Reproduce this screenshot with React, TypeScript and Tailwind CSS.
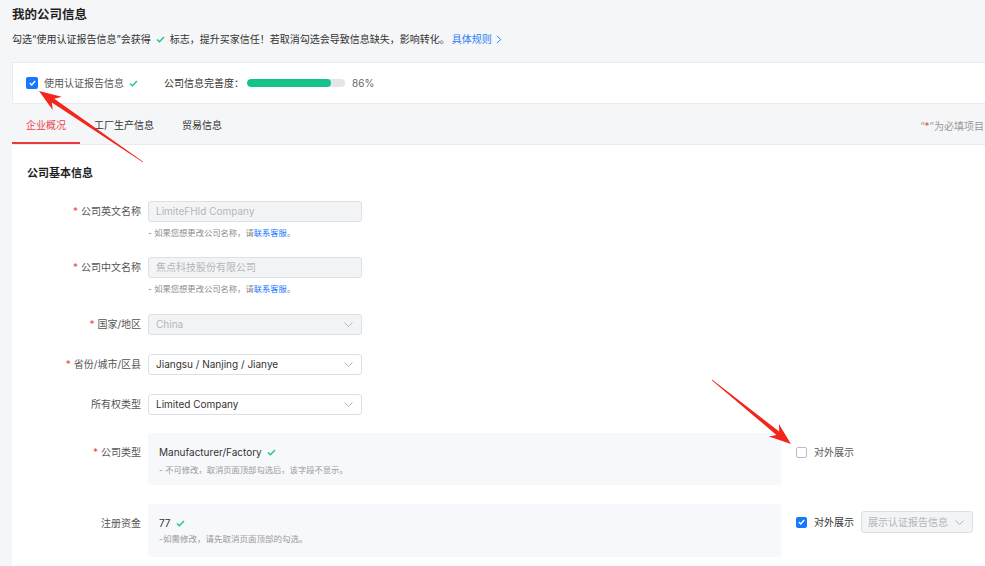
import type { FC, ReactNode } from 'react';

const GreenCheck: FC = () => (
  <svg width="9" height="7" viewBox="0 0 9 7" className="inline-block">
    <path d="M1 3.4l2.4 2.4L8 1" fill="none" stroke="#1fc58e" strokeWidth="1.4" />
  </svg>
);

const Chevron: FC = () => (
  <svg width="9" height="5" viewBox="0 0 9 5">
    <path d="M0.5 0.5l4 4 4-4" fill="none" stroke="#b3b6bb" strokeWidth="1" />
  </svg>
);

const Box: FC<{ checked?: boolean; size?: string }> = ({ checked, size = 'w-[11px] h-[11px]' }) =>
  checked ? (
    <span className={`${size} rounded-[2px] bg-[#1677ff] flex items-center justify-center shrink-0`}>
      <svg width="7" height="6" viewBox="0 0 7 6">
        <path d="M0.8 3l1.9 1.9L6.2 1" fill="none" stroke="#fff" strokeWidth="1.4" />
      </svg>
    </span>
  ) : (
    <span className={`${size} rounded-[2px] bg-white border border-[#b9bcc1] shrink-0`} />
  );

const Label: FC<{ req?: boolean; children: ReactNode; top?: boolean }> = ({ req, children, top }) => (
  <div
    className={`w-[129px] shrink-0 text-right text-[10px] text-[#555] ${top ? 'pt-[12px] leading-[14px]' : 'leading-[21px]'}`}
  >
    {req && <span className="text-[#f04a4a] mr-[3px]">*</span>}
    {children}
  </div>
);

const Field: FC<{ value: string; disabled?: boolean; select?: boolean }> = ({ value, disabled, select }) => (
  <div
    className={`w-[214px] h-[21px] border rounded-[3px] pl-[7px] pr-[8px] flex items-center justify-between text-[10px] ${
      disabled ? 'bg-[#f3f4f6] border-[#dde0e5] text-[#b3b6bb]' : 'bg-white border-[#dde0e5] text-[#333]'
    }`}
  >
    <span>{value}</span>
    {select && <Chevron />}
  </div>
);

const Helper: FC = () => (
  <div className="mt-[5px] text-[8.3px] leading-[12px] text-[#8c8c8c]">
    - 如果您想更改公司名称，请<span className="text-[#1677ff]">联系客服</span>。
  </div>
);

function arrow(x1: number, y1: number, x2: number, y2: number) {
  const dx = x2 - x1;
  const dy = y2 - y1;
  const len = Math.hypot(dx, dy);
  const ux = dx / len;
  const uy = dy / len;
  const nx = -uy;
  const ny = ux;
  const head = 22;
  const half = 8;
  const neck = 2.2;
  const tail = 0.4;
  const bx = x2 - ux * head;
  const by = y2 - uy * head;
  const kx = bx + ux * 5;
  const ky = by + uy * 5;
  const p = (x: number, y: number) => `${x.toFixed(1)},${y.toFixed(1)}`;
  return [
    p(x1 + nx * tail, y1 + ny * tail),
    p(kx + nx * neck, ky + ny * neck),
    p(bx + nx * half, by + ny * half),
    p(x2, y2),
    p(bx - nx * half, by - ny * half),
    p(kx - nx * neck, ky - ny * neck),
    p(x1 - nx * tail, y1 - ny * tail),
  ].join(' ');
}

export default function App() {
  return (
    <div className="relative w-full h-screen overflow-hidden bg-[#f5f6f8] font-['Inter','Noto_Sans_CJK_SC',sans-serif] text-[#333]">
      <div className="w-[1000px] pl-3">
        <h1 className="pt-[7px] text-[12.5px] leading-[16px] font-bold text-[#1f1f1f]">我的公司信息</h1>
        <p className="mt-[9px] text-[10px] leading-[14px] text-[#333] flex items-center">
          勾选“使用认证报告信息”会获得
          <span className="mx-[5px] flex">
            <GreenCheck />
          </span>
          标志，提升买家信任！若取消勾选会导致信息缺失，影响转化。
          <span className="ml-[2px] text-[#2a7ef5] flex items-center">
            具体规则
            <svg width="6" height="9" viewBox="0 0 6 9" className="ml-[4px]">
              <path d="M1 0.8l3.6 3.7L1 8.2" fill="none" stroke="#2a7ef5" strokeWidth="1" />
            </svg>
          </span>
        </p>

        <div className="mt-[16px] h-[42px] bg-white border-y border-l border-[#e9ebef] flex items-center pl-[13px] text-[10px]">
          <Box checked size="w-[12px] h-[12px]" />
          <span className="ml-[6px] text-[#555]">使用认证报告信息</span>
          <span className="ml-[5px] flex">
            <GreenCheck />
          </span>
          <span className="ml-[26px] text-[#333]">公司信息完善度：</span>
          <div className="ml-[3px] w-[98px] h-[8px] rounded-full bg-[#e2e5ea] overflow-hidden">
            <div className="h-full w-[86%] rounded-full bg-[#14c38a]" />
          </div>
          <span className="ml-[7px] text-[#666]">86%</span>
        </div>

        <div className="h-[40px] flex items-stretch justify-between pr-[16px] text-[10px]">
          <div className="flex">
            <div className="px-[14px] pt-[4px] flex items-center border-b-2 border-[#e83a3f] text-[#e8434a]">企业概况</div>
            <div className="px-[14px] pt-[4px] flex items-center border-b-2 border-transparent text-[#333]">工厂生产信息</div>
            <div className="px-[14px] pt-[4px] flex items-center border-b-2 border-transparent text-[#333]">贸易信息</div>
          </div>
          <div className="pt-[4px] flex items-center text-[#999]">
            “<span className="text-[#f04a4a]">*</span>”为必填项目
          </div>
        </div>

        <div className="bg-white border-t border-[#e9ebef] h-[500px]">
          <h2 className="pl-[15px] pt-[20px] text-[11px] leading-[16px] font-bold text-[#1f1f1f]">公司基本信息</h2>

          <div className="flex mt-[20px] gap-[7px]">
            <Label req>公司英文名称</Label>
            <div>
              <Field value="LimiteFHId Company" disabled />
              <Helper />
            </div>
          </div>

          <div className="flex mt-[18px] gap-[7px]">
            <Label req>公司中文名称</Label>
            <div>
              <Field value="焦点科技股份有限公司" disabled />
              <Helper />
            </div>
          </div>

          <div className="flex mt-[19px] gap-[7px]">
            <Label req>国家/地区</Label>
            <Field value="China" disabled select />
          </div>

          <div className="flex mt-[19px] gap-[7px]">
            <Label req>省份/城市/区县</Label>
            <Field value="Jiangsu / Nanjing / Jianye" select />
          </div>

          <div className="flex mt-[19px] gap-[7px]">
            <Label>所有权类型</Label>
            <Field value="Limited Company" select />
          </div>

          <div className="flex mt-[18px] gap-[7px]">
            <Label req top>
              公司类型
            </Label>
            <div className="w-[633px] h-[52px] rounded-[3px] bg-[#f7f8fb] pl-[11px] pt-[12px]">
              <div className="flex items-center text-[10px] leading-[14px] text-[#333]">
                Manufacturer/Factory
                <span className="ml-[5px] flex">
                  <GreenCheck />
                </span>
              </div>
              <div className="mt-[5px] text-[8.3px] leading-[12px] text-[#999]">- 不可修改，取消页面顶部勾选后，该字段不显示。</div>
            </div>
            <div className="ml-[8px] mt-[12px] h-[14px] flex items-center">
              <Box />
              <span className="ml-[7px] text-[10px] text-[#555]">对外展示</span>
            </div>
          </div>

          <div className="flex mt-[19px] gap-[7px]">
            <Label top>注册资金</Label>
            <div className="w-[633px] h-[53px] rounded-[3px] bg-[#f7f8fb] pl-[11px] pt-[12px]">
              <div className="flex items-center text-[10px] leading-[14px] text-[#333]">
                77
                <span className="ml-[5px] flex">
                  <GreenCheck />
                </span>
              </div>
              <div className="mt-[3px] text-[8.5px] leading-[12px] text-[#999]">-如需修改，请先取消页面顶部的勾选。</div>
            </div>
            <div className="ml-[8px] mt-[7px] h-[22px] flex items-center">
              <Box checked />
              <span className="ml-[7px] text-[10px] text-[#333]">对外展示</span>
              <div className="ml-[7px] w-[112px] h-[22px] border border-[#dde0e5] bg-[#f3f4f6] rounded-[3px] pl-[6px] pr-[8px] flex items-center justify-between text-[10px] text-[#b3b6bb]">
                <span>展示认证报告信息</span>
                <Chevron />
              </div>
            </div>
          </div>
        </div>
      </div>

      <svg className="absolute inset-0 pointer-events-none" width="985" height="566">
        <polygon points={arrow(143, 162, 39, 91)} fill="#f2261c" />
        <polygon points={arrow(712, 380, 791, 444)} fill="#f2261c" />
      </svg>
    </div>
  );
}
